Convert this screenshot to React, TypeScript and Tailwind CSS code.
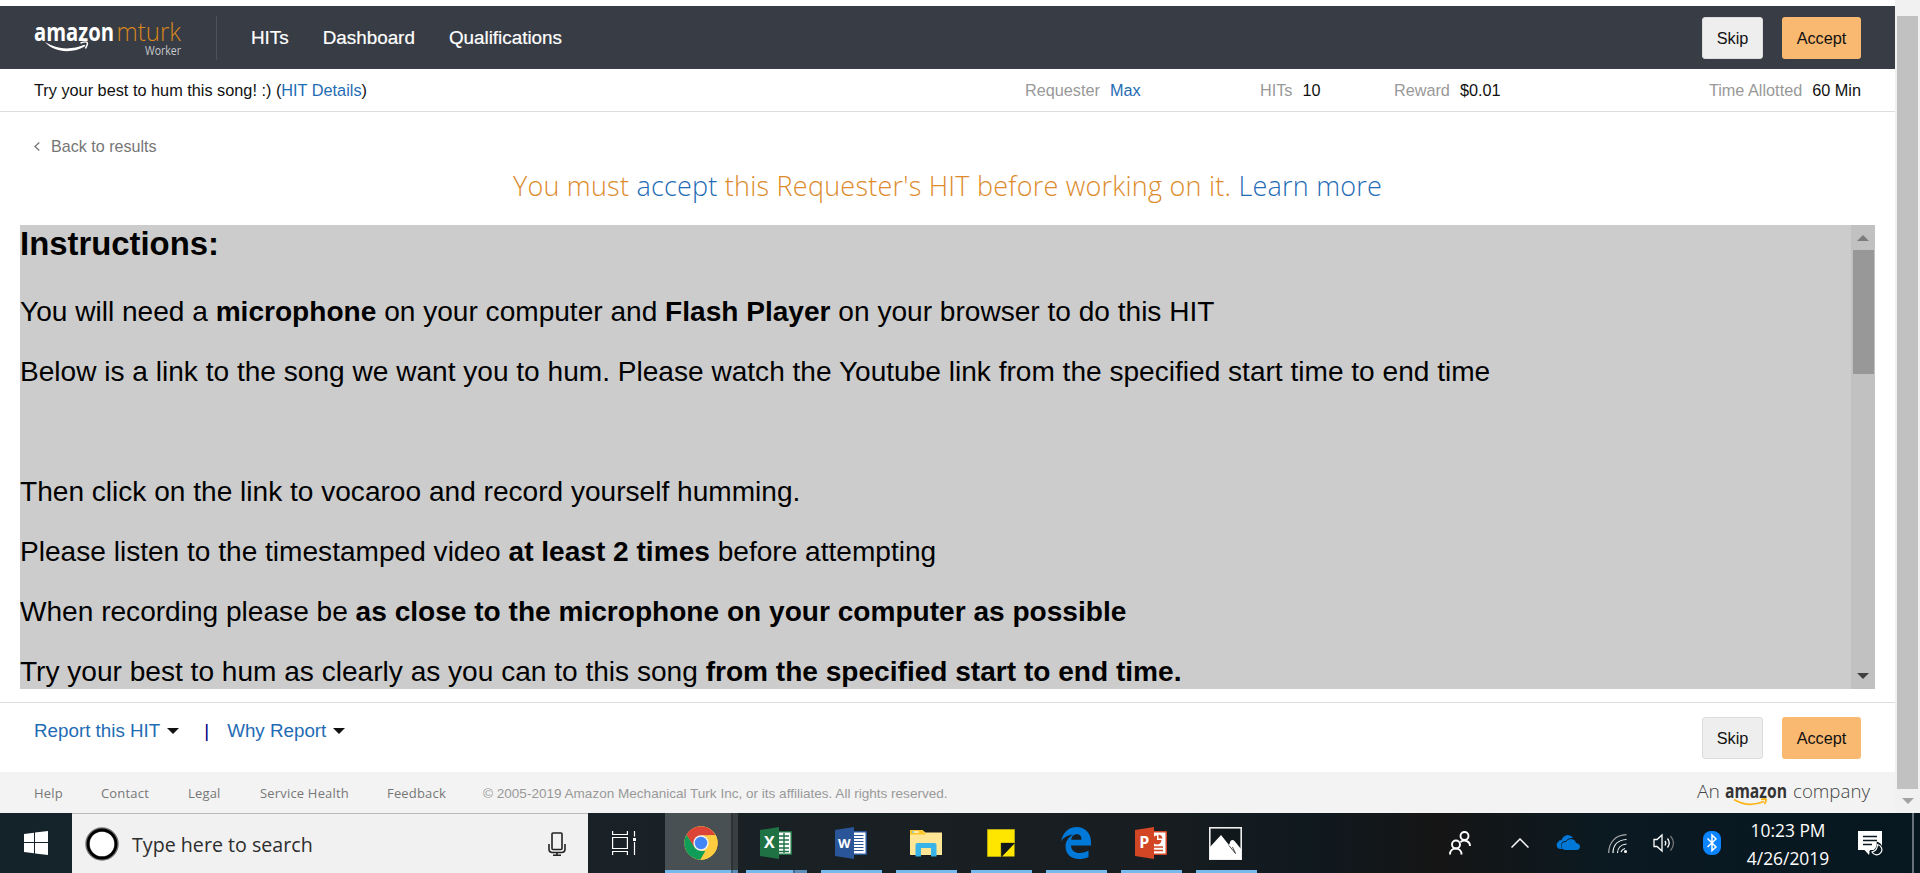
import React from "react";

const navFont = "font-['Liberation_Sans',Arial,sans-serif]";

function Fit({ x, y, w, size, fill, weight, family, children }: { x: number; y: number; w: number; size: number; fill: string; weight?: number; family: string; children: string }) {
  return (
    <text x={x} y={y} textLength={w} lengthAdjust="spacingAndGlyphs" fontSize={size} fill={fill} fontWeight={weight ?? 400} fontFamily={family}>
      {children}
    </text>
  );
}

function Logo() {
  return (
    <svg className="ml-[34px] h-[63px] w-[148px] overflow-visible" viewBox="34 6 148 63">
      <Fit x={34} y={41} w={80} size={24.5} fill="#fff" weight={700} family="Open Sans, sans-serif">amazon</Fit>
      <Fit x={116.500} y={41} w={64.500} size={25.5} fill="#d9861a" weight={300} family="Open Sans, sans-serif">mturk</Fit>
      <Fit x={145} y={55} w={36} size={12} fill="#c8cacd" family="Open Sans, sans-serif">Worker</Fit>
      <path d="M45 42C53 52 72 54.500 85.500 46L84.300 44.800C72 50 57 50 45 42Z" fill="#fff" />
      <path d="M80.500 43Q86.500 41 87.300 42.700Q87.800 44 85.500 48.500" fill="none" stroke="#fff" strokeWidth="1.500" />
    </svg>
  );
}

function Buttons() {
  return (
    <div className="flex gap-[19px] text-[16.25px] text-[#111]">
      <button className="h-[42px] w-[61px] rounded-[3px] border border-[#dcdcdc] bg-[#eee] pt-px">Skip</button>
      <button className="h-[42px] w-[79px] rounded-[3px] bg-[#fab971] pt-px">Accept</button>
    </div>
  );
}

function Caret() {
  return (
    <svg className="ml-[7px] h-[6px] w-[12px]" viewBox="0 0 12 6">
      <path d="M0 0H12L6 6Z" fill="#111" />
    </svg>
  );
}

function Task({ icon, group }: { icon: React.ReactNode; group?: boolean }) {
  return (
    <div className="flex h-full w-[61px] shrink-0 flex-col items-center justify-between">
      <div className="flex h-[57px] w-full items-center justify-center pt-[3px] pr-[2px]">{icon}</div>
      <div className="flex h-[3px] w-full bg-[#76b9ed]">{group && <div className="ml-[47px] w-[14px] border-l-2 border-[#466a88] bg-[#5b8fb9]" />}</div>
    </div>
  );
}

function Office({ letter, dark, light, children }: { letter: string; dark: string; light: string; children: React.ReactNode }) {
  return (
    <svg className="h-8 w-8" viewBox="0 0 32 32">
      <path d="M17 4H31Q32 4 32 5V27Q32 28 31 28H17Z" fill={light} />
      <path d="M18 5.500H30.500V26.500H18Z" fill="#fff" />
      {children}
      <path d="M0 3L19 0V32L0 29Z" fill={dark} />
      <text x="9.300" y="21.200" textAnchor="middle" fontSize={letter === "W" ? 13 : 16} fontWeight="700" fill="#fff" fontFamily="Open Sans, sans-serif">{letter}</text>
    </svg>
  );
}

function Chrome() {
  return (
    <svg className="h-[34px] w-[34px]" viewBox="0 0 34 34">
      <circle cx="17" cy="17" r="16.700" fill="#ffcd40" />
      <path d="M17 17L9.800 21L2.500 8.700A16.700 16.700 0 0 1 31.500 9.300H17Z" fill="#db4437" />
      <path d="M2.500 8.700L10.200 21L17 25H24L16.600 33.700A16.700 16.700 0 0 1 2.500 8.700Z" fill="#0f9d58" />
      <path d="M16.300 33.700L23.700 20.700L24 9.300H31.700A16.700 16.700 0 0 1 16.300 33.700Z" fill="#ffcd40" />
      <circle cx="17" cy="17" r="7.700" fill="#f1f1f1" />
      <circle cx="17" cy="17" r="6.200" fill="#4285f4" />
    </svg>
  );
}

function Taskbar() {
  return (
    <footer className="flex h-[60px] w-full bg-[linear-gradient(90deg,#14232a,#1a2125_40%,#171d20_60%,#10191f_68%,#151515_75%,#0b1a22_84%,#07171f)] font-['Open_Sans','Noto_Sans',sans-serif] text-white">
      <div className="flex w-[72px] items-center justify-center">
        <svg className="h-6 w-6" viewBox="0 0 24 24" fill="#fff">
          <path d="M0 3L10 1.700V11H0ZM11 1.500L24 0V11H11ZM0 12H10V22.300L0 21ZM11 12H24V24L11 22.500Z" />
        </svg>
      </div>
      <div className="flex w-[516px] items-center border-t border-[#b9b9b9] bg-[#f1f1f1]">
        <svg className="ml-[13px] h-[34px] w-[34px]" viewBox="0 0 34 34">
          <circle cx="17" cy="17" r="14.500" fill="#fff" stroke="#777" strokeWidth="4.500" />
          <circle cx="17" cy="17" r="14" fill="none" stroke="#000" strokeWidth="2.800" />
        </svg>
        <span className="ml-[13px] pt-[2px] text-[19.650px] text-[#2d2d2d]">Type here to search</span>
        <svg className="ml-auto mr-[22px] h-6 w-[18px]" viewBox="0 0 18 24" fill="none" stroke="#222" strokeWidth="1.600">
          <rect x="4" y="1" width="10" height="16.500" rx="1" />
          <path d="M1 12V17Q1 20.500 4.500 20.500H13.500Q17 20.500 17 17V12M9 20.500V23M5 23.200H13" />
        </svg>
      </div>
      <div className="flex w-[77px] items-center pl-6">
        <svg className="h-6 w-6" viewBox="0 0 24 24" fill="none" stroke="#fff" strokeWidth="1.200">
          <path d="M.6 0V3.500H15.400V0M.6 24V20.500H15.400V24M.6 6.500H15.400V17.500H.6ZM22.500 0V5.500M22.500 11V24" />
          <rect x="21" y="7" width="3" height="3" fill="#fff" stroke="none" />
        </svg>
      </div>
      <div className="flex h-full w-[73px] flex-col bg-[linear-gradient(90deg,#485053_66px,#2b3134_66px,#2b3134_68px,#3a4042_68px)]">
        <div className="flex h-[57px] items-center pt-[3px] pl-[19px]"><Chrome /></div>
        <div className="h-[3px] bg-[linear-gradient(90deg,#76b9ed_66px,#466a88_66px,#466a88_68px,#5b8fb9_68px)]" />
      </div>
      <div className="ml-[8px] flex gap-[14px]">
        <Task group icon={<Office letter="X" dark="#1f7244" light="#207245"><path d="M18 9H29M18 13H29M18 17H29M18 21H29M18 24.500H29M24 6V26" stroke="#207245" strokeWidth="1.400" /></Office>} />
        <Task icon={<Office letter="W" dark="#2a5699" light="#2a5699"><path d="M18 8.500H28.500M18 11.500H28.500M18 14.500H28.500M18 17.500H28.500M18 20.500H28.500M18 23.500H28.500" stroke="#2a5699" strokeWidth="1.200" /></Office>} />
        <Task icon={
          <svg className="h-8 w-8" viewBox="0 0 32 32">
            <path d="M0 3.500H13L15.500 5.500H32V28H0Z" fill="#ffe694" />
            <path d="M0 3H12.500L16 7.500H0Z" fill="#fcc52c" />
            <path d="M2 5H9" stroke="#fff" strokeWidth="1.200" /><path d="M2 5H4" stroke="#39b3e6" strokeWidth="1.200" />
            <path d="M5.500 29.500V18Q5.500 16 7.500 16H24.500Q26.500 16 26.500 18V29.500H21V21H11V29.500Z" fill="#39b4e8" />
          </svg>} />
        <Task icon={
          <svg className="h-7 w-7" viewBox="0 0 28 28">
            <path d="M.5.5H27.500V14H14V27.500H.5Z" fill="#ffe600" stroke="#b5a80d" />
            <path d="M27.500 14.500L15 27.500H27.500Z" fill="#ffe600" /><path d="M14 14H27.500L14.500 27.500Z" fill="#10181b" />
          </svg>} />
        <Task icon={
          <svg className="h-8 w-[30px]" viewBox="0 0 30 32">
            <path d="M0 14.500C2 5 8 0 15.500 0C25 0 30 7 30 15V18.500H10C10.500 24 14 26 18.500 26C22 26 25 25 27.500 23.500V30C24.500 31.500 21 32 18 32C10 32 4.500 27 4.500 19.500C4.500 14 8 9.500 12.500 7.500C6.500 8 2.500 10.500 0 14.500ZM10.300 12.700H20.500C20.500 9 18.800 7.200 16 7.200C12.500 7.200 10.700 9.500 10.300 12.700Z" fill="#0078d7" fillRule="evenodd" />
          </svg>} />
        <Task icon={<Office letter="P" dark="#d24625" light="#d24625"><path d="M22 13V8.500A4.500 4.500 0 1 0 26.500 13Z" fill="#d24625" /><path d="M23.500 7.500A4.500 4.500 0 0 1 27.500 11.500H23.500Z" fill="#d24625" /><path d="M19 20H28M19 23.500H28" stroke="#d24625" strokeWidth="1.500" /></Office>} />
        <Task icon={
          <svg className="h-[33px] w-[33px]" viewBox="0 0 33 33">
            <rect x=".8" y=".8" width="31.400" height="31.400" fill="#10181b" stroke="#eee" strokeWidth="1.600" />
            <path d="M1 20L12 8L20 18L21.500 14Q23.500 12 25.500 14L32 22V32H1Z" fill="#fff" /><path d="M20 18.500L26.500 26.500L23.500 20" stroke="#444" strokeWidth="1" fill="none" />
          </svg>} />
      </div>
      <div className="ml-auto flex items-center">
        <svg className="h-6 w-[22px]" viewBox="0 0 22 24" fill="none" stroke="#fff" strokeWidth="1.900">
          <circle cx="15.500" cy="5" r="4" /><circle cx="7" cy="13.500" r="4" />
          <path d="M1 23.500C1 15.500 12.500 15.500 12.500 23.500M11.500 11C15 8 21 10 21 15" />
        </svg>
        <svg className="ml-10 h-[10px] w-[18px]" viewBox="0 0 18 10" fill="none" stroke="#fff" strokeWidth="1.500"><path d="M.5 9.500L9 1L17.500 9.500" /></svg>
        <svg className="ml-[27px] h-4 w-6" viewBox="0 0 24 16" fill="#0078d7">
          <path d="M4 14A4 4 0 0 1 2 7Q3 5 5.500 5Q7 1 11 0Q15 0 17 3Q12 2.500 10 6Q5 6 5 11Q5 13 6 14Z" />
          <path d="M9 15A4 4 0 0 1 10 7Q12 3.500 16 4.200Q19.500 5 20 8Q24 8.500 24 12Q23.500 15 20.500 15Z" />
        </svg>
        <svg className="ml-7 h-[19px] w-[19px]" viewBox="0 0 19 19" fill="none" stroke="#fff" strokeWidth="1.200">
          <path d="M.7 19C.7 8 8 1 18.500 .7" stroke="#aaa" /><path d="M5 19C5 11 10 6 18.500 5.500M9.500 19C9.500 14 13 10.500 18.500 10" /><path d="M13 18C13.500 16.500 15 15 17 14.500" /><circle cx="17.500" cy="17.500" r="1.500" fill="#fff" stroke="none" />
        </svg>
        <svg className="ml-[26px] h-5 w-[22px]" viewBox="0 0 22 20" fill="none" stroke="#fff" strokeWidth="1.300">
          <path d="M1 6.500H4L9 2V18L4 13.500H1Z" /><path d="M12 8Q13.500 10 12 12.500M14.500 5.500Q18 10 14.500 14.500" /><path d="M17.500 3Q23.500 10 17.500 17.500" stroke="#777" />
        </svg>
        <svg className="ml-7 h-6 w-[18px]" viewBox="0 0 18 24"><rect width="18" height="24" rx="8" fill="#0a84ff" /><path d="M4.500 7.500L13 16L9 19.500V4L13 8L4.500 16" fill="none" stroke="#fff" strokeWidth="1.500" /></svg>
        <div className="ml-[24px] flex h-[60px] w-[86px] flex-col items-center pt-[3px] text-[17.400px] leading-[28px] whitespace-nowrap"><span>10:23 PM</span><span>4/26/2019</span></div>
        <svg className="ml-[27px] h-[25px] w-[25px]" viewBox="0 0 25 25"><path d="M0 0H24V19H12L11 24L6.500 19H0Z" fill="#fff" /><path d="M5 5.500H19M5 9.500H19M5 13.500H14" stroke="#0a1820" strokeWidth="1.300" /><path d="M20 12.500A5.500 5.500 0 1 1 13.500 21Q20 20 20 12.500Z" fill="#fff" stroke="#0a1820" strokeWidth="2.600" /><path d="M19.500 13.500A5.200 5.200 0 1 1 14 21Q19.500 19.500 19.500 13.500Z" fill="#0a1820" stroke="#fff" strokeWidth="1.200" /></svg>
        <div className="ml-[29px] mr-[6px] h-[60px] w-[2px] bg-[#66717a]" />
      </div>
    </footer>
  );
}

export default function App() {
  return (
    <div className={`flex h-[873px] w-[1920px] flex-col overflow-hidden bg-white text-[#111] ${navFont}`}>
      <div className="flex h-[813px]">
        <div className="flex w-[1895px] flex-col pt-[6px]">
          <header className="flex h-[63px] items-center bg-[#383c45] pr-[34px] text-white">
            <Logo />
            <div className="ml-[34px] h-[44px] w-px bg-[#4d515a]" />
            <nav className="ml-[34px] flex gap-[34px] pt-px text-[18.850px] [-webkit-text-stroke:0.2px_white]">
              <span>HITs</span><span>Dashboard</span><span>Qualifications</span>
            </nav>
            <div className="ml-auto"><Buttons /></div>
          </header>
          <section className="flex h-[43px] items-center border-b border-[#ddd] px-[34px] text-[16.250px] whitespace-nowrap">
            <span className="text-[16.300px]">Try your best to hum this song! :) (<a className="text-[#1f6cb5]">HIT Details</a>)</span>
            <div className="ml-auto flex">
              <span className="w-[235px]"><span className="mr-[10px] text-[#999]">Requester</span><a className="text-[#1f6cb5]">Max</a></span>
              <span className="w-[134px]"><span className="mr-[10px] text-[#999]">HITs</span>10</span>
              <span className="w-[315px]"><span className="mr-[10px] text-[#999]">Reward</span>$0.01</span>
              <span><span className="mr-[10px] text-[#999]">Time Allotted</span>60 Min</span>
            </div>
          </section>
          <div className="flex h-[113px] flex-col">
            <div className="mt-[22px] flex h-[24px] items-center pl-[34px] text-[16.100px] text-[#767676]">
              <svg className="mr-[11px] h-[9px] w-[6px]" viewBox="0 0 6 9" fill="none" stroke="#767676" strokeWidth="1.300"><path d="M5.300 .5L1 4.500L5.300 8.500" /></svg>
              Back to results
            </div>
            <h1 className="flex h-[56px] items-center justify-center font-['Open_Sans',sans-serif] text-[27px] font-light tracking-[0.220px] whitespace-pre text-[#dd8b2c]">
              You must <a className="text-[#1f6cb5]">accept</a> this Requester's HIT before working on it. <a className="text-[#1f6cb5]">Learn more</a>
            </h1>
          </div>
          <main className="ml-5 flex h-[464px] w-[1855px] overflow-hidden bg-[#ccc] text-black">
            <div className="w-[1831px] text-[28.090px] leading-[32px]">
              <h2 className="mb-[33px] text-[32.860px] leading-[38px] font-bold">Instructions:</h2>
              <div className="flex flex-col gap-7">
                <p>You will need a <b>microphone</b> on your computer and <b>Flash Player</b> on your browser to do this HIT</p>
                <p>Below is a link to the song we want you to hum. Please watch the Youtube link from the specified start time to end time</p>
                <p>&nbsp;</p>
                <p>Then click on the link to vocaroo and record yourself humming.</p>
                <p>Please listen to the timestamped video <b>at least 2 times</b> before attempting</p>
                <p>When recording please be <b>as close to the microphone on your computer as possible</b></p>
                <p>Try your best to hum as clearly as you can to this song <b>from the specified start to end time.</b></p>
              </div>
            </div>
            <div className="flex w-6 flex-col items-center bg-[#c1c1c1]">
              <svg className="mt-[10px] h-[6px] w-[12px]" viewBox="0 0 12 6"><path d="M0 6L6 0L12 6Z" fill="#7c7c7c" /></svg>
              <div className="mt-[9px] h-[124px] w-[21px] bg-[#989898]" />
              <svg className="mt-auto mb-[10px] h-[6px] w-[12px]" viewBox="0 0 12 6"><path d="M0 0L6 6L12 0Z" fill="#404040" /></svg>
            </div>
          </main>
          <section className="mt-[13px] flex h-[70px] border-t border-[#ddd] pr-[34px] pl-[34px]">
            <div className="flex h-[56px] items-center text-[18.800px] text-[#1f6cb5]">
              <span>Report this HIT</span><Caret />
              <span className="mr-[18px] ml-[25px] text-[#000080]">|</span>
              <span>Why Report</span><Caret />
            </div>
            <div className="mt-[14px] ml-auto"><Buttons /></div>
          </section>
          <section className="flex h-[41px] items-center bg-[#f3f3f3] pl-[34px] font-['Open_Sans',sans-serif] text-[13px] text-[#777]">
            <div className="flex pt-[3px] tracking-[0.180px]"><span className="w-[67px]">Help</span><span className="w-[87px]">Contact</span><span className="w-[72px]">Legal</span><span className="w-[127px]">Service Health</span><span className="w-[96px]">Feedback</span></div>
            <span className="pt-[4px] font-['Liberation_Sans',sans-serif] text-[13.550px] text-[#999]">© 2005-2019 Amazon Mechanical Turk Inc, or its affiliates. All rights reserved.</span>
            <svg className="mr-[24px] ml-auto h-[36px] w-[174px] overflow-visible" viewBox="1697 775 174 36">
              <Fit x={1697} y={797.5} w={23} size={19} fill="#444" weight={300} family="Open Sans, sans-serif">An</Fit>
              <Fit x={1725} y={797.5} w={62} size={19} fill="#333" weight={700} family="Open Sans, sans-serif">amazon</Fit>
              <Fit x={1793} y={797.5} w={77} size={19} fill="#444" weight={300} family="Open Sans, sans-serif">company</Fit>
              <path d="M1734 799.500Q1748 808 1764 801.500M1761 799.500Q1767 798 1766 800Q1766 802 1764.500 804" fill="none" stroke="#fdb515" strokeWidth="1.800" />
            </svg>
          </section>
        </div>
        <div className="flex w-[25px] flex-col items-center bg-[#f1f1f1] pt-4">
          <div className="h-[773px] w-[21px] bg-[#c1c1c1]" />
          <svg className="mt-[9px] h-[6px] w-[12px]" viewBox="0 0 12 6"><path d="M0 0L6 6L12 0Z" fill="#a3a3a3" /></svg>
        </div>
      </div>
      <Taskbar />
    </div>
  );
}
